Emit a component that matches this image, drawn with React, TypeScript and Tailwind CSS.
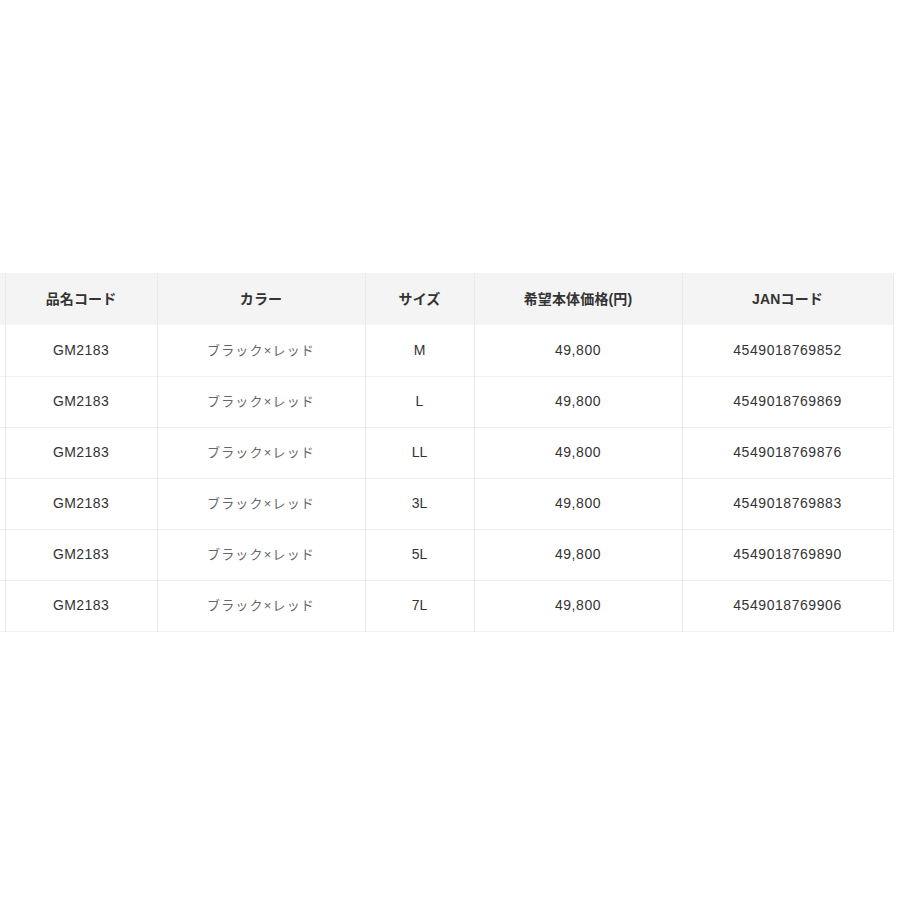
import React from "react";

const rows = [
  { size: "M", jan: "4549018769852" },
  { size: "L", jan: "4549018769869" },
  { size: "LL", jan: "4549018769876" },
  { size: "3L", jan: "4549018769883" },
  { size: "5L", jan: "4549018769890" },
  { size: "7L", jan: "4549018769906" },
];

const font = { fontFamily: '"Liberation Sans", "Noto Sans CJK JP", sans-serif' };

export default function App() {
  return (
    <div className="min-h-[900px] w-[900px] bg-white pt-[273px]" style={font}>
      <table className="border-collapse table-fixed w-[893px] text-[14px] text-[#333]">
        <colgroup>
          <col className="w-[5px]" />
          <col className="w-[152px]" />
          <col className="w-[208px]" />
          <col className="w-[109px]" />
          <col className="w-[208px]" />
          <col className="w-[211px]" />
        </colgroup>
        <thead>
          <tr className="h-[52px] bg-[#f4f4f4]">
            <th className="border-r border-[#eaeaea]"></th>
            <th className="border-r border-[#eaeaea] font-bold tracking-[0.01em]">品名コード</th>
            <th className="border-r border-[#eaeaea] font-bold tracking-[0.01em]">カラー</th>
            <th className="border-r border-[#eaeaea] font-bold tracking-[0.01em]">サイズ</th>
            <th className="border-r border-[#eaeaea] font-bold tracking-[0.01em]">希望本体価格(円)</th>
            <th className="border-r border-[#eaeaea] font-bold tracking-[0.01em]">JANコード</th>
          </tr>
        </thead>
        <tbody>
          {rows.map((r) => (
            <tr key={r.jan} className="h-[51px] border-b border-[#efefef]">
              <td className="border-r border-[#eaeaea]"></td>
              <td className="border-r border-[#eaeaea] text-center tracking-[0.03em]">GM2183</td>
              <td className="border-r border-[#eaeaea] text-center text-[13px] text-[#666] tracking-[0.09em]">
                ブラック×レッド
              </td>
              <td className="border-r border-[#eaeaea] text-center">{r.size}</td>
              <td className="border-r border-[#eaeaea] text-center tracking-[0.04em]">49,800</td>
              <td className="border-r border-[#eaeaea] text-center tracking-[0.04em]">{r.jan}</td>
            </tr>
          ))}
        </tbody>
      </table>
    </div>
  );
}
